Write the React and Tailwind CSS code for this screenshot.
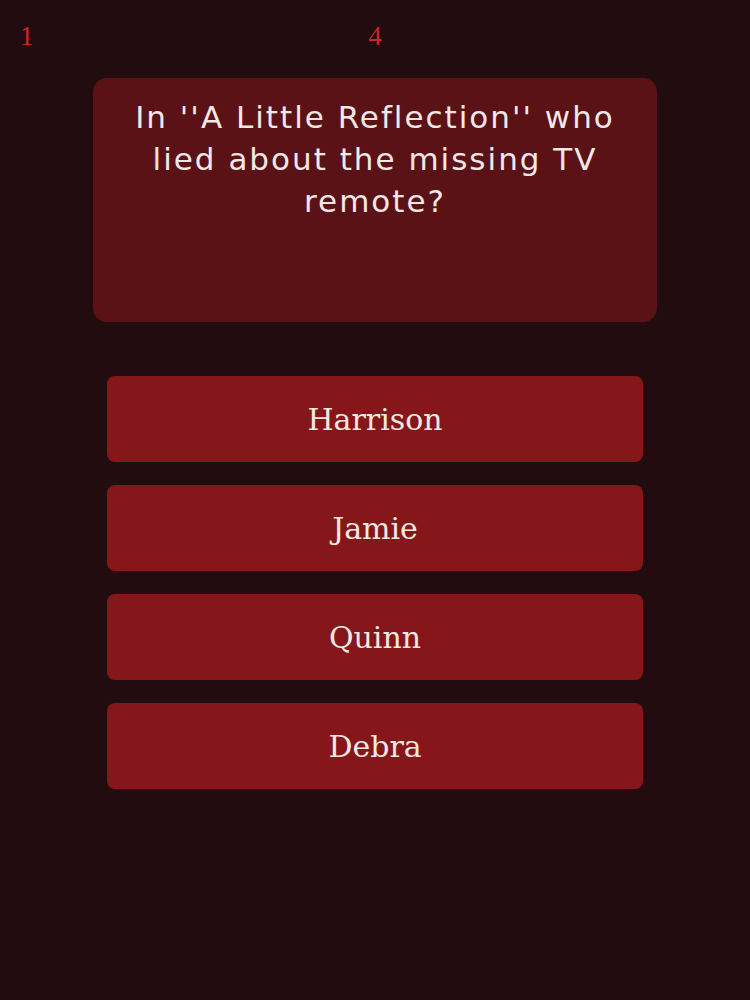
import React from 'react';

const answers = ['Harrison', 'Jamie', 'Quinn', 'Debra'];

const App = () => {
    return (
        <div className="min-h-screen w-full bg-[#220c0f] pt-[20px]">
            {/* score / question counter */}
            <div className="grid grid-cols-3 items-center px-[20px] h-[32px] text-[27px] leading-[32px] text-[#cc262c] font-['Liberation_Serif',serif]">
                <span>1</span>
                <span className="text-center">4</span>
                <span />
            </div>

            {/* question card */}
            <div className="mx-[93px] mt-[26px] h-[244px] rounded-[14px] bg-[#5a1216] px-[24px] pt-[18px]">
                <p className="text-center text-[31px] leading-[42px] tracking-[2px] text-[#f3e8e6] font-['DejaVu_Sans',sans-serif]">
                    In ''A Little Reflection'' who lied about the missing TV remote?
                </p>
            </div>

            {/* answers */}
            <div className="mx-[107px] mt-[54px] flex flex-col gap-[23px]">
                {answers.map((a) => (
                    <button
                        key={a}
                        className="h-[86px] w-full rounded-[8px] bg-[#85171a] text-[30px] text-[#f5e8e2] font-['DejaVu_Serif',serif]"
                    >
                        {a}
                    </button>
                ))}
            </div>
        </div>
    );
};

export default App;
